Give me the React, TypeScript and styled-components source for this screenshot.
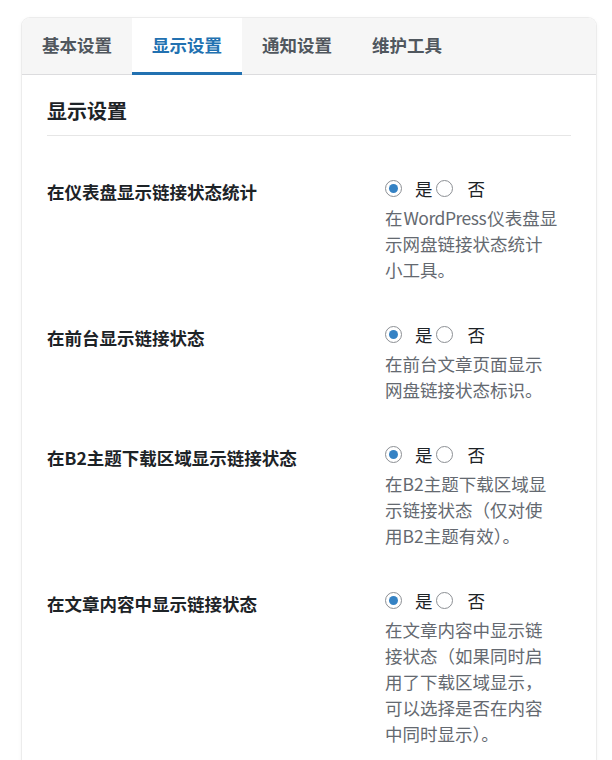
import React from 'react';
import styled, { createGlobalStyle } from 'styled-components';

const GlobalStyle = createGlobalStyle`
  html, body {
    margin: 0;
    padding: 0;
    background: #fff;
  }
  body {
    font-family: "Noto Sans CJK SC", "Noto Sans", sans-serif;
    color: #1d2327;
  }
`;

const Page = styled.div`
  padding: 17px 16px 0 21px;
`;

const Card = styled.div`
  width: 574px;
  background: #fff;
  border: 1px solid #ececec;
  border-bottom: none;
  border-radius: 9px 9px 0 0;
  box-shadow: 0 1px 4px rgba(0, 0, 0, 0.04);
  overflow: hidden;
`;

const TabBar = styled.div`
  display: flex;
  height: 56px;
  background: #f6f6f6;
  border-bottom: 1px solid #dcdcde;
`;

const Tab = styled.div<{ $active?: boolean }>`
  display: flex;
  align-items: center;
  padding: 0 20px 4px;
  font-size: 17.5px;
  font-weight: 600;
  color: ${(p) => (p.$active ? '#2271b1' : '#50575e')};
  background: ${(p) => (p.$active ? '#fff' : 'transparent')};
  box-shadow: ${(p) => (p.$active ? 'inset 0 -3px 0 #2271b1' : 'none')};
  margin-bottom: -1px;
`;

const Body = styled.div`
  padding: 23px 25px 0 25px;
`;

const Heading = styled.h2`
  margin: 0;
  padding-bottom: 11px;
  border-bottom: 1px solid #e6e6e6;
  font-size: 20px;
  font-weight: 700;
  line-height: 26px;
  color: #1d2327;
`;

const Rows = styled.div`
  padding-top: 20px;
`;

const Row = styled.div`
  display: grid;
  grid-template-columns: 338px 1fr;
  padding: 19px 0;
`;

const Label = styled.div`
  padding-top: 4px;
  font-size: 17.5px;
  font-weight: 700;
  line-height: 26px;
  color: #1d2327;
`;

const Field = styled.div`
  display: flex;
  flex-direction: column;
`;

const RadioLine = styled.div`
  display: flex;
  align-items: center;
  height: 26px;
  font-size: 17.5px;
  color: #1d2327;
`;

const Radio = styled.span<{ $checked?: boolean; $gap: number }>`
  position: relative;
  box-sizing: border-box;
  width: 17px;
  height: 17px;
  border-radius: 50%;
  border: 1px solid #8c8f94;
  background: #fff;
  margin-right: ${(p) => p.$gap}px;
  flex-shrink: 0;
  &::after {
    content: '';
    display: ${(p) => (p.$checked ? 'block' : 'none')};
    position: absolute;
    left: 3px;
    top: 3px;
    width: 9px;
    height: 9px;
    border-radius: 50%;
    background: #3582c4;
  }
`;

const Option = styled.span<{ $spacing?: number }>`
  margin-right: ${(p) => p.$spacing ?? 0}px;
`;

const Description = styled.p`
  margin: 4px 0 0;
  width: 174px;
  font-size: 17.5px;
  line-height: 26px;
  color: #646970;
`;

const Latin = styled.span`
  letter-spacing: -0.5px;
  padding: 0 1px;
`;

const settings: { label: string; desc: React.ReactNode }[] = [
  {
    label: '在仪表盘显示链接状态统计',
    desc: (
      <>
        在<Latin>WordPress</Latin>仪表盘显示网盘链接状态统计小工具。
      </>
    ),
  },
  {
    label: '在前台显示链接状态',
    desc: '在前台文章页面显示网盘链接状态标识。',
  },
  {
    label: '在B2主题下载区域显示链接状态',
    desc: '在B2主题下载区域显示链接状态（仅对使用B2主题有效）。',
  },
  {
    label: '在文章内容中显示链接状态',
    desc: '在文章内容中显示链接状态（如果同时启用了下载区域显示，可以选择是否在内容中同时显示）。',
  },
];

const tabs = ['基本设置', '显示设置', '通知设置', '维护工具'];

const App = () => {
  return (
    <Page>
      <GlobalStyle />
      <Card>
        <TabBar>
          {tabs.map((t) => (
            <Tab key={t} $active={t === '显示设置'}>
              {t}
            </Tab>
          ))}
        </TabBar>
        <Body>
          <Heading>显示设置</Heading>
          <Rows>
            {settings.map((s) => (
              <Row key={s.label}>
                <Label>{s.label}</Label>
                <Field>
                  <RadioLine>
                    <Radio $checked $gap={13} />
                    <Option $spacing={3}>是</Option>
                    <Radio $gap={15} />
                    <Option>否</Option>
                  </RadioLine>
                  <Description>{s.desc}</Description>
                </Field>
              </Row>
            ))}
          </Rows>
        </Body>
      </Card>
    </Page>
  );
};

export default App;
